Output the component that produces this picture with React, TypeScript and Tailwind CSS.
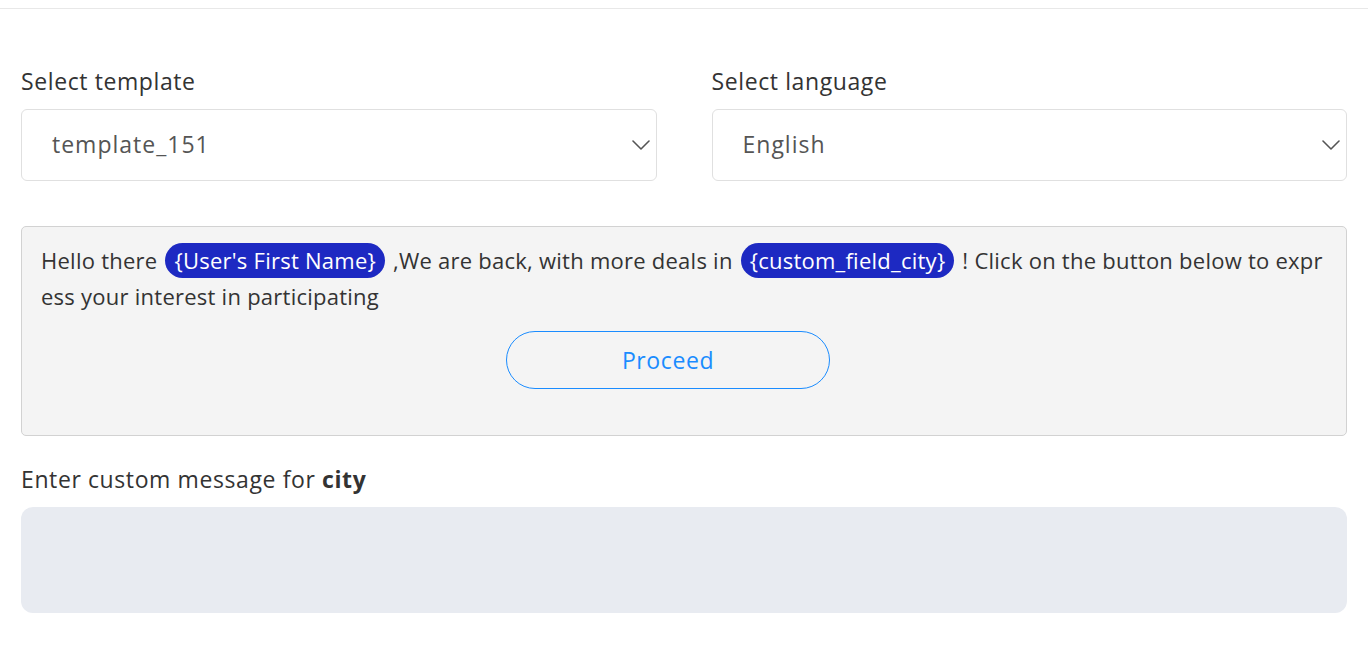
import React from "react";

function Chevron() {
  return (
    <svg width="18" height="10" viewBox="0 0 18 10" fill="none">
      <path d="M1 1l8 8 8-8" stroke="#555" strokeWidth="1.6" strokeLinecap="round" strokeLinejoin="round" />
    </svg>
  );
}

function SelectBox({ label, value }: { label: string; value: string }) {
  return (
    <div className="flex flex-col">
      <div className="text-[23px] tracking-[0.6px] leading-[30px] text-[#333] mb-[13px]">{label}</div>
      <div className="h-[72px] bg-white border border-[#e0e0e0] rounded-[6px] flex items-center justify-between pl-[30px] pr-[6px]">
        <span className="text-[23px] tracking-[1px] text-[#555] -mt-[2px]">{value}</span>
        <Chevron />
      </div>
    </div>
  );
}

function Chip({ children }: { children: React.ReactNode }) {
  return (
    <span className="inline-block bg-[#1d29c2] text-white rounded-full px-[9px] leading-[35px] mx-[2px]">{children}</span>
  );
}

export default function App() {
  return (
    <div className="w-[1368px] h-[656px] bg-white" style={{ fontFamily: "'Open Sans', sans-serif" }}>
      <div className="h-[9px] border-b border-[#e8e8e8]" />
      <div className="px-[21px] pt-[57px]">
        <div className="grid grid-cols-2 gap-[55px]">
          <SelectBox label="Select template" value="template_151" />
          <SelectBox label="Select language" value="English" />
        </div>
        <div className="mt-[45px] bg-[#f4f4f4] border border-[#d2d2d2] rounded-[5px] pl-[19px] pr-[20px] pt-[15px] pb-[46px]">
          <p className="text-[22px] tracking-[0.25px] leading-[36px] text-[#333] break-all">
            Hello there <Chip>{"{User's First Name}"}</Chip> ,We are back, with more deals in <Chip>{"{custom_field_city}"}</Chip> ! Click on the button below to expr
            <br />
            ess your interest in participating
          </p>
          <div className="mt-[17px] pl-[465px]">
            <button className="w-[324px] h-[58px] rounded-full border border-[#1a8cff] text-[#1a8cff] text-[23px] tracking-[0.6px]">Proceed</button>
          </div>
        </div>
        <div className="mt-[28px] text-[23px] tracking-[0.6px] leading-[30px] text-[#333]">
          Enter custom message for <b className="font-bold">city</b>
        </div>
        <div className="mt-[13px] h-[106px] bg-[#e8ebf1] rounded-[12px]" />
      </div>
    </div>
  );
}
